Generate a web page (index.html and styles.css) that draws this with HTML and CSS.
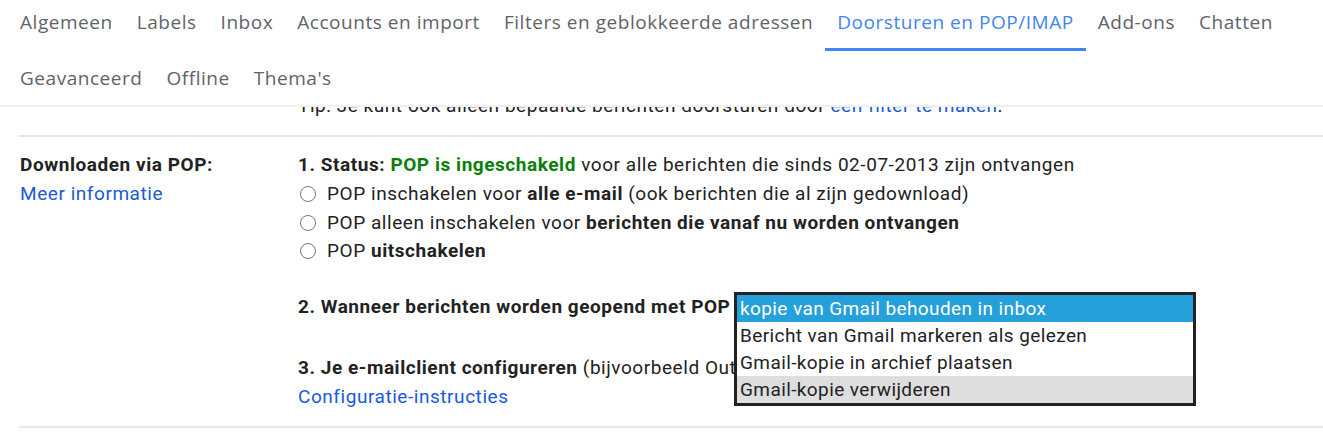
FILE: index.html
```html
<!DOCTYPE html>
<html lang="nl">
<head>
<meta charset="utf-8">
<title>Instellingen</title>
<link rel="stylesheet" href="styles.css">
</head>
<body>
<nav class="tabs">
  <a class="tab">Algemeen</a>
  <a class="tab">Labels</a>
  <a class="tab">Inbox</a>
  <a class="tab">Accounts en import</a>
  <a class="tab">Filters en geblokkeerde adressen</a>
  <a class="tab active">Doorsturen en POP/IMAP</a>
  <a class="tab">Add-ons</a>
  <a class="tab">Chatten</a>
  <a class="tab">Geavanceerd</a>
  <a class="tab">Offline</a>
  <a class="tab">Thema's</a>
</nav>
<main class="content">
  <div class="tip-row">
    <div></div>
    <div>Tip: Je kunt ook alleen bepaalde berichten doorsturen door <a class="link">een filter te maken</a>.</div>
  </div>
  <section class="setting">
    <div class="label">
      <div class="bold">Downloaden via POP:</div>
      <a class="link">Meer informatie</a>
    </div>
    <div class="value">
      <div><span class="bold">1. Status: </span><span class="bold green">POP is ingeschakeld</span> voor alle berichten die sinds 02-07-2013 zijn ontvangen</div>
      <label class="radio-line"><span class="radio"></span>POP inschakelen voor <b>alle e-mail</b> (ook berichten die al zijn gedownload)</label>
      <label class="radio-line"><span class="radio"></span>POP alleen inschakelen voor <b>berichten die vanaf nu worden ontvangen</b></label>
      <label class="radio-line"><span class="radio"></span>POP <b>uitschakelen</b></label>
      <div class="step2"><span class="bold">2. Wanneer berichten worden geopend met POP</span>
        <ul class="listbox">
          <li class="opt selected">kopie van Gmail behouden in inbox</li>
          <li class="opt">Bericht van Gmail markeren als gelezen</li>
          <li class="opt">Gmail-kopie in archief plaatsen</li>
          <li class="opt hover">Gmail-kopie verwijderen</li>
        </ul>
      </div>
      <div class="step3"><span class="bold">3. Je e-mailclient configureren</span> (bijvoorbeeld Outlook, Eudora, Netscape Mail)</div>
      <a class="link">Configuratie-instructies</a>
    </div>
  </section>
</main>
</body>
</html>
```
FILE: styles.css
```css
* { box-sizing: border-box; }
html, body { margin: 0; padding: 0; background: #fff; }
body {
  font-family: Roboto, "Liberation Sans", sans-serif;
  font-size: 19px;
  letter-spacing: 0.55px;
  color: #222;
  overflow: hidden;
}
.tabs {
  display: flex;
  flex-wrap: wrap;
  align-content: flex-start;
  row-gap: 5px;
  height: 107px;
  padding-left: 8px;
  border-bottom: 2px solid #f0f0f0;
}
.tab {
  display: block;
  height: 51px;
  padding: 0 12px;
  line-height: 44px;
  border-bottom: 3px solid transparent;
  font-family: "Open Sans", Roboto, sans-serif;
  font-size: 19px;
  letter-spacing: 0.54px;
  color: #5f6368;
  white-space: nowrap;
  cursor: pointer;
}
.tab.active {
  color: #4285f4;
  border-bottom-color: #4285f4;
}
.content {
  overflow: hidden;
  height: 327px;
}
.tip-row {
  display: grid;
  grid-template-columns: 278px 1fr;
  margin-top: -15px;
  padding-left: 20px;
  line-height: 28.7px;
  padding-bottom: 14px;
  white-space: nowrap;
}
.setting {
  display: grid;
  grid-template-columns: 278px 1fr;
  margin-left: 19px;
  padding-left: 1px;
  padding-top: 14.5px;
  padding-bottom: 14px;
  border-top: 2px solid #e8e8e8;
  border-bottom: 2px solid #e8e8e8;
  line-height: 28.7px;
}
.label, .value { display: flex; flex-direction: column; align-items: flex-start; }
.value > * { white-space: nowrap; }
.bold, b { font-weight: 700; }
.green { color: #0a800a; }
.link { color: #1a5ad8; cursor: pointer; }
.radio-line { display: block; }
.radio {
  display: inline-block;
  vertical-align: -2px;
  width: 16px;
  height: 16px;
  margin: 0 11px 0 2px;
  border: 1.5px solid #767676;
  border-radius: 50%;
}
.step2 { position: relative; margin-top: 27.3px; }
.step3 { margin-top: 32.3px; }
.listbox {
  position: absolute;
  left: 436px;
  top: -1.5px;
  width: 462px;
  margin: 0;
  padding: 0;
  list-style: none;
  background: #fff;
  border: 3px solid #222;
  letter-spacing: 0.4px;
}
.opt {
  height: 27px;
  line-height: 27px;
  padding: 0 3px;
  white-space: nowrap;
  color: #222;
}
.opt.selected { background: #26a0da; color: #fff; }
.opt.hover { background: #dedede; }
```
